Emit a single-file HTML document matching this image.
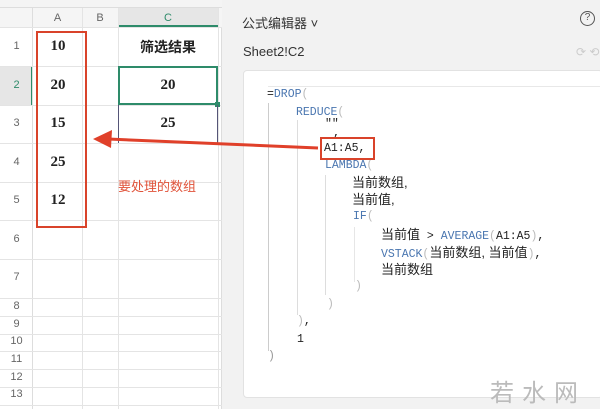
<!DOCTYPE html>
<html><head><meta charset="utf-8"><style>
*{margin:0;padding:0;box-sizing:border-box}
body{width:600px;height:409px;overflow:hidden;background:#f2f2f2;font-family:"Liberation Sans","Noto Sans CJK SC",sans-serif;position:relative}
.a{position:absolute}
.sheet{left:0;top:0;width:222px;height:409px;background:#fff;border-right:1px solid #ddd}
.hl{position:absolute;left:0;width:222px;height:1px;background:#e4e4e4}
.vl{position:absolute;top:8px;width:1px;height:401px;background:#e4e4e4}
.rn{position:absolute;left:0;width:33px;text-align:center;font-size:11px;color:#666}
.num{position:absolute;left:33px;width:50px;text-align:center;font:bold 15px "Liberation Serif",serif;color:#222}
.c{position:absolute;font-family:"Liberation Mono","Noto Sans CJK SC",monospace;font-size:11.5px;color:#222;white-space:pre;line-height:16px;height:16px}
.f{color:#4a76b0}
.p{color:#bbb}
.cn{font-family:"Liberation Sans","Noto Sans CJK SC",sans-serif;font-size:13px}
</style></head><body>
<div class="a sheet">
 <div class="a" style="left:0;top:0;width:222px;height:8px;background:#f4f4f4;border-bottom:1px solid #ddd"></div>
 <div class="a" style="left:0;top:8px;width:222px;height:19px;background:#f5f5f5"></div>
 <div class="a" style="left:118px;top:8px;width:100px;height:19px;background:#e6e6e6;border-bottom:2px solid #2e8b6a"></div>
 <div class="a" style="left:0;top:66px;width:33px;height:39px;background:#e6e6e6;border-right:2px solid #2e8b6a"></div>
 <div class="a" style="left:0;top:8px;width:33px;height:401px;border-right:1px solid #ddd"></div>
 <div class="a" style="left:33px;top:12px;width:49px;text-align:center;font-size:11px;color:#666">A</div>
 <div class="a" style="left:82px;top:12px;width:36px;text-align:center;font-size:11px;color:#666">B</div>
 <div class="a" style="left:118px;top:12px;width:100px;text-align:center;font-size:11px;color:#2e8b6a">C</div>
 <div class="vl" style="left:82px"></div><div class="vl" style="left:118px"></div><div class="vl" style="left:218px"></div>
 <div class="hl" style="top:27px"></div><div class="hl" style="top:66px"></div><div class="hl" style="top:105px"></div><div class="hl" style="top:143px"></div><div class="hl" style="top:182px"></div><div class="hl" style="top:220px"></div><div class="hl" style="top:259px"></div><div class="hl" style="top:298px"></div><div class="hl" style="top:316px"></div><div class="hl" style="top:334px"></div><div class="hl" style="top:351px"></div><div class="hl" style="top:369px"></div><div class="hl" style="top:387px"></div><div class="hl" style="top:405px"></div>
 <div class="rn" style="top:40px">1</div><div class="rn" style="top:79px;color:#2e8b6a">2</div><div class="rn" style="top:117px">3</div><div class="rn" style="top:156px">4</div><div class="rn" style="top:194px">5</div><div class="rn" style="top:233px">6</div><div class="rn" style="top:271px">7</div><div class="rn" style="top:300px">8</div><div class="rn" style="top:318px">9</div><div class="rn" style="top:335px">10</div><div class="rn" style="top:353px">11</div><div class="rn" style="top:371px">12</div><div class="rn" style="top:388px">13</div>
 <div class="num" style="top:38px">10</div><div class="num" style="top:77px">20</div><div class="num" style="top:115px">15</div><div class="num" style="top:154px">25</div><div class="num" style="top:192px">12</div>
 <div class="a" style="left:118px;top:37px;width:100px;text-align:center;font-weight:bold;font-size:14px;color:#222">筛选结果</div>
 <div class="a" style="left:118px;top:66px;width:100px;height:39px;border:2px solid #2e8b6a"></div>
 <div class="a" style="left:215px;top:102px;width:5px;height:5px;background:#2e8b6a"></div>
 <div class="num" style="left:118px;width:100px;top:77px">20</div>
 <div class="num" style="left:118px;width:100px;top:115px">25</div>
 <div class="a" style="left:118px;top:105px;width:100px;height:38px;border-left:1px solid #557;border-right:1px solid #557"></div>
 <div class="a" style="left:36px;top:31px;width:51px;height:197px;border:2px solid #d9432a"></div>
 <div class="a" style="left:118px;top:176px;font-size:13px;color:#e0533a">要处理的数组</div>
</div>
<div class="a" style="left:242px;top:13px;font-size:13px;color:#333">公式编辑器 ˅</div>
<div class="a" style="left:580px;top:11px;width:15px;height:15px;border:1.5px solid #555;border-radius:50%;font-size:10px;text-align:center;line-height:12px;color:#555">?</div>
<div class="a" style="left:243px;top:44px;font-size:13px;color:#333">Sheet2!C2</div>
<div class="a" style="left:576px;top:45px;font-size:12px;color:#ccc">⟳ ⟲</div>
<div class="a" style="left:243px;top:70px;width:360px;height:328px;background:#fff;border:1px solid #e2e2e2;border-radius:4px"></div>
<div class="a" style="left:268px;top:86px;width:340px;height:1px;background:#e8e8e8"></div>
<div class="a" style="left:268px;top:103px;width:1px;height:248px;background:#ccc"></div>
<div class="a" style="left:297px;top:120px;width:1px;height:195px;background:#ddd"></div>
<div class="a" style="left:325px;top:175px;width:1px;height:120px;background:#ddd"></div>
<div class="a" style="left:354px;top:227px;width:1px;height:55px;background:#e6e6e6"></div>
<div class="c" style="left:267px;top:87px">=<span class="f">DROP</span><span class="p">(</span></div>
<div class="c" style="left:296px;top:105px"><span class="f">REDUCE</span><span class="p">(</span></div>
<div class="c" style="left:325px;top:117px">""</div>
<div class="c" style="left:333px;top:126px">,</div>
<div class="c" style="left:324px;top:141px">A1:A5,</div>
<div class="c" style="left:325px;top:158px"><span class="f">LAMBDA</span><span class="p">(</span></div>
<div class="c cn" style="left:352px;top:175px">当前数组,</div>
<div class="c cn" style="left:352px;top:192px">当前值,</div>
<div class="c" style="left:353px;top:209px"><span class="f">IF</span><span class="p">(</span></div>
<div class="c" style="left:381px;top:227px"><span class="cn">当前值</span> &gt; <span class="f">AVERAGE</span><span class="p">(</span>A1:A5<span class="p">)</span>,</div>
<div class="c" style="left:381px;top:245px"><span class="f">VSTACK</span><span class="p">(</span><span class="cn">当前数组, 当前值</span><span class="p">)</span>,</div>
<div class="c cn" style="left:381px;top:262px">当前数组</div>
<div class="c p" style="left:355px;top:279px">)</div>
<div class="c p" style="left:327px;top:297px">)</div>
<div class="c" style="left:297px;top:314px"><span class="p">)</span>,</div>
<div class="c" style="left:297px;top:332px">1</div>
<div class="c p" style="left:268px;top:349px;color:#999">)</div>
<div class="a" style="left:320px;top:137px;width:55px;height:23px;border:2px solid #d9432a"></div>
<svg class="a" style="left:0;top:0" width="600" height="409"><line x1="318" y1="148" x2="108" y2="139" stroke="#e0402a" stroke-width="3"/><polygon points="93,139 112,130 111,148" fill="#e0402a"/></svg>
<div class="a" style="left:490px;top:373px;font-size:24px;letter-spacing:8px;color:#bbb">若水网</div>
</body></html>
